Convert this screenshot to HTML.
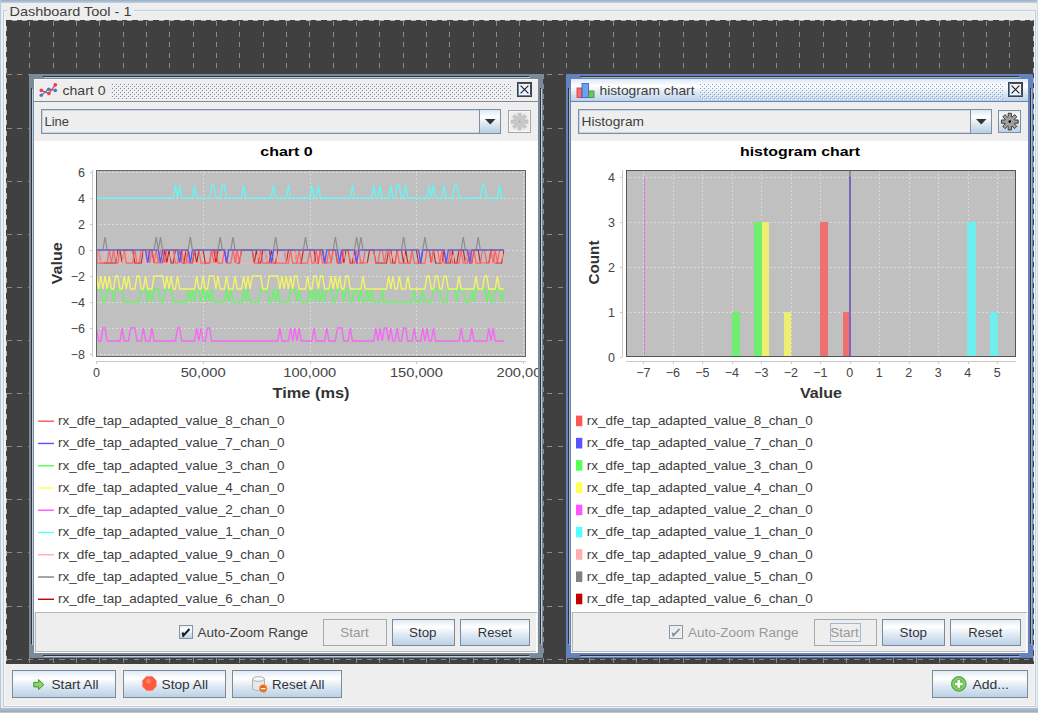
<!DOCTYPE html><html><head><meta charset="utf-8"><style>
html,body{margin:0;padding:0;background:#eeeeee;width:1038px;height:713px;overflow:hidden}
svg{display:block;font-family:"Liberation Sans",sans-serif}
</style></head><body>
<svg width="1038" height="713" viewBox="0 0 1038 713" shape-rendering="crispEdges">
<defs>
<linearGradient id="btn" x1="0" y1="0" x2="0" y2="1">
<stop offset="0" stop-color="#DDE8F3"/><stop offset="0.3" stop-color="#FFFFFF"/><stop offset="0.6" stop-color="#DDE8F3"/><stop offset="1" stop-color="#B8CFE5"/>
</linearGradient>
<linearGradient id="winTop" x1="0" y1="0" x2="0" y2="1">
<stop offset="0" stop-color="#a4acb4"/><stop offset="0.35" stop-color="#a4bcd4"/><stop offset="1" stop-color="#c0d2e4"/>
</linearGradient>
<linearGradient id="winBot" x1="0" y1="0" x2="0" y2="1">
<stop offset="0" stop-color="#b0c0d0"/><stop offset="1" stop-color="#96a6b6"/>
</linearGradient>
<pattern id="bumpsI" x="0" y="0" width="4" height="4" patternUnits="userSpaceOnUse">
<rect x="0" y="0" width="1" height="1" fill="#7A8A99"/><rect x="2" y="2" width="1" height="1" fill="#7A8A99"/>
<rect x="1" y="1" width="1" height="1" fill="#ffffff"/><rect x="3" y="3" width="1" height="1" fill="#ffffff"/>
</pattern>
<pattern id="bumpsA" x="0" y="0" width="4" height="4" patternUnits="userSpaceOnUse">
<rect x="0" y="0" width="1" height="1" fill="#86a0d0"/><rect x="2" y="2" width="1" height="1" fill="#86a0d0"/>
<rect x="1" y="1" width="1" height="1" fill="#ffffff"/><rect x="3" y="3" width="1" height="1" fill="#ffffff"/>
</pattern>
</defs>

<rect x="0" y="0" width="1038" height="3" fill="url(#winTop)" />
<rect x="0" y="0" width="1" height="713" fill="#b8c8d8" />
<rect x="1037" y="0" width="1" height="713" fill="#d0dce8" />
<rect x="0" y="708" width="1038" height="5" fill="url(#winBot)" />
<rect x="0" y="712" width="1038" height="1" fill="#c8c4c0" />
<rect x="3.5" y="10.5" width="1032" height="696" fill="none" stroke="#B8CFE5" stroke-width="1"/>
<rect x="4.5" y="11.5" width="1030" height="694" fill="none" stroke="#f6f6f6" stroke-width="1"/>
<rect x="7" y="4" width="127" height="12" fill="#eeeeee" />
<text x="9.5" y="15.5" font-size="13" fill="#3e3e3e" textLength="122" lengthAdjust="spacingAndGlyphs" >Dashboard Tool - 1</text>
<rect x="6" y="20" width="1028" height="644" fill="#404040" />
<path d="M29.5 21.4V663 M53.5 21.4V663 M76.5 21.4V663 M99.5 21.4V663 M123.5 21.4V663 M146.5 21.4V663 M169.5 21.4V663 M193.5 21.4V663 M216.5 21.4V663 M239.5 21.4V663 M263.5 21.4V663 M286.5 21.4V663 M309.5 21.4V663 M333.5 21.4V663 M356.5 21.4V663 M379.5 21.4V663 M403.5 21.4V663 M426.5 21.4V663 M449.5 21.4V663 M473.5 21.4V663 M496.5 21.4V663 M519.5 21.4V663 M543.5 21.4V663 M566.5 21.4V663 M589.5 21.4V663 M613.5 21.4V663 M636.5 21.4V663 M659.5 21.4V663 M683.5 21.4V663 M706.5 21.4V663 M729.5 21.4V663 M753.5 21.4V663 M776.5 21.4V663 M799.5 21.4V663 M823.5 21.4V663 M846.5 21.4V663 M869.5 21.4V663 M893.5 21.4V663 M916.5 21.4V663 M939.5 21.4V663 M963.5 21.4V663 M986.5 21.4V663 M1009.5 21.4V663" stroke="#8a8a8a" stroke-width="1" stroke-dasharray="5 5.436" fill="none"/>
<path d="M6.3 74.5H1033 M6.3 128.5H1033 M6.3 181.5H1033 M6.3 234.5H1033 M6.3 287.5H1033 M6.3 340.5H1033 M6.3 393.5H1033 M6.3 446.5H1033 M6.3 499.5H1033 M6.3 552.5H1033 M6.3 606.5H1033 M6.3 659.5H1033" stroke="#8a8a8a" stroke-width="1" stroke-dasharray="5.4 5.2" fill="none"/>
<path d="M6 20.5H1034M6.5 20V664M1033.5 20V664" stroke="#b4b4b4" stroke-width="1" fill="none"/>
<path d="M6 20.5H1034M6.5 20V664" stroke="#404040" stroke-width="1" stroke-dasharray="5.5 5" fill="none"/>
<rect x="29" y="74" width="514" height="584" fill="#7A8A99" />
<rect x="43" y="76" width="486" height="1" fill="#333333" />
<rect x="31" y="88" width="1" height="556" fill="#333333" />
<rect x="540" y="88" width="1" height="556" fill="#333333" />
<rect x="43" y="655" width="486" height="1" fill="#333333" />
<rect x="44" y="77" width="486" height="1" fill="#B8CFE5" />
<rect x="32" y="89" width="1" height="556" fill="#B8CFE5" />
<rect x="541" y="89" width="1" height="556" fill="#B8CFE5" />
<rect x="44" y="656" width="486" height="1" fill="#B8CFE5" />
<rect x="34" y="79" width="504" height="574" fill="#eeeeee" />
<rect x="34" y="79" width="504" height="23" fill="#eeeeee" />
<rect x="34" y="101" width="504" height="1" fill="#7A8A99" />
<rect x="566" y="74" width="467" height="584" fill="#6382BF" />
<rect x="580" y="76" width="439" height="1" fill="#333333" />
<rect x="568" y="88" width="1" height="556" fill="#333333" />
<rect x="1030" y="88" width="1" height="556" fill="#333333" />
<rect x="580" y="655" width="439" height="1" fill="#333333" />
<rect x="581" y="77" width="439" height="1" fill="#A3B8CC" />
<rect x="569" y="89" width="1" height="556" fill="#A3B8CC" />
<rect x="1031" y="89" width="1" height="556" fill="#A3B8CC" />
<rect x="581" y="656" width="439" height="1" fill="#A3B8CC" />
<rect x="571" y="79" width="457" height="574" fill="#eeeeee" />
<rect x="571" y="79" width="457" height="23" fill="url(#btn)" />
<rect x="571" y="101" width="457" height="1" fill="#6382BF" />
<rect x="34" y="79" width="504" height="1" fill="#fafafa" />
<rect x="34" y="79" width="1" height="22" fill="#fafafa" />
<g shape-rendering="geometricPrecision"><polyline points="41.3,95.3 48.7,89.2 55.3,90.4" fill="none" stroke="#4a7ac8" stroke-width="1.3"/><circle cx="41.3" cy="95.3" r="1.8" fill="#4a7ac8"/><circle cx="48.7" cy="89.2" r="1.8" fill="#4a7ac8"/><circle cx="55.3" cy="90.4" r="1.8" fill="#4a7ac8"/><polyline points="41.3,90.4 48.9,93.5 55.3,84.8" fill="none" stroke="#e8404a" stroke-width="1.3"/><circle cx="41.3" cy="90.4" r="1.8" fill="#e8404a"/><circle cx="48.9" cy="93.5" r="1.8" fill="#e8404a"/><circle cx="55.3" cy="84.8" r="1.9" fill="#e8404a"/></g>
<text x="62.5" y="95" font-size="13" fill="#3e3e3e" textLength="43" lengthAdjust="spacingAndGlyphs" >chart 0</text>
<rect x="112" y="84" width="399" height="16" fill="url(#bumpsI)" />
<rect x="517" y="82" width="15" height="15" fill="#3c4048" />
<rect x="518" y="83" width="13" height="13" fill="#6382BF" />
<rect x="519" y="83" width="12" height="12" fill="#4a4e58" />
<rect x="519" y="84" width="11" height="11" fill="#f4f4f4" />
<path d="M520.6 85.6L528.4 93.4M520.6 93.4L528.4 85.6" stroke="#1e2230" stroke-width="1.15" fill="none" shape-rendering="geometricPrecision"/>
<g shape-rendering="geometricPrecision"><rect x="577" y="88" width="5" height="9.5" fill="#f07070" stroke="#e03030" stroke-width="0.8"/><rect x="582" y="83.5" width="6.5" height="14" fill="#70a0f0" stroke="#2a5ad0" stroke-width="0.8"/><rect x="588.7" y="91" width="5.3" height="6.5" fill="#70c070" stroke="#30903a" stroke-width="0.8"/></g>
<text x="599.5" y="95" font-size="13" fill="#3e3e3e" textLength="95" lengthAdjust="spacingAndGlyphs" >histogram chart</text>
<rect x="700" y="84" width="303" height="16" fill="url(#bumpsA)" />
<rect x="1008" y="82" width="15" height="15" fill="#3c4048" />
<rect x="1009" y="83" width="13" height="13" fill="#6382BF" />
<rect x="1010" y="83" width="12" height="12" fill="#4a4e58" />
<rect x="1010" y="84" width="11" height="11" fill="#f4f4f4" />
<path d="M1011.6 85.6L1019.4 93.4M1011.6 93.4L1019.4 85.6" stroke="#1e2230" stroke-width="1.15" fill="none" shape-rendering="geometricPrecision"/>
<rect x="41" y="109" width="460" height="25" fill="#7F8FA0" />
<rect x="42" y="110" width="458" height="23" fill="#C4D6E8" />
<rect x="43" y="111" width="436" height="21" fill="#eeeeee" />
<rect x="479" y="110" width="1" height="23" fill="#7F8FA0" />
<rect x="480" y="110" width="20" height="23" fill="url(#btn)" />
<path d="M485 119H495.5L490.25 124.5Z" fill="#333" shape-rendering="geometricPrecision"/>
<text x="44.5" y="126" font-size="13" fill="#3e3e3e" >Line</text>
<rect x="508.5" y="110.5" width="22" height="22" fill="none" stroke="#a4a4a4"/>
<rect x="509.5" y="111.5" width="20" height="20" fill="none" stroke="#f8f8f8"/>
<path d="M517.98 116.87 L517.99 113.25 L521.21 113.25 L521.22 116.87 L521.80 117.11 L524.37 114.56 L526.64 116.83 L524.09 119.40 L524.33 119.98 L527.95 119.99 L527.95 123.21 L524.33 123.22 L524.09 123.80 L526.64 126.37 L524.37 128.64 L521.80 126.09 L521.22 126.33 L521.21 129.95 L517.99 129.95 L517.98 126.33 L517.40 126.09 L514.83 128.64 L512.56 126.37 L515.11 123.80 L514.87 123.22 L511.25 123.21 L511.25 119.99 L514.87 119.98 L515.11 119.40 L512.56 116.83 L514.83 114.56 L517.40 117.11Z" fill="#c8c8c8" stroke="#bcbcbc" stroke-width="0.8" shape-rendering="geometricPrecision"/>
<circle cx="519.6" cy="121.6" r="1.2" fill="#b0b0b0" shape-rendering="geometricPrecision"/>
<rect x="578" y="109" width="414" height="25" fill="#7F8FA0" />
<rect x="579" y="110" width="412" height="23" fill="#C4D6E8" />
<rect x="580" y="111" width="390" height="21" fill="#eeeeee" />
<rect x="970" y="110" width="1" height="23" fill="#7F8FA0" />
<rect x="971" y="110" width="20" height="23" fill="url(#btn)" />
<path d="M976 119H986.5L981.25 124.5Z" fill="#333" shape-rendering="geometricPrecision"/>
<text x="581.5" y="126" font-size="13" fill="#3e3e3e" textLength="62.5" lengthAdjust="spacingAndGlyphs" >Histogram</text>
<rect x="998" y="110" width="23" height="23" fill="url(#btn)" />
<rect x="998.5" y="110.5" width="22" height="22" fill="none" stroke="#8090a0"/>
<path d="M1008.18 116.87 L1008.19 113.25 L1011.41 113.25 L1011.42 116.87 L1012.00 117.11 L1014.57 114.56 L1016.84 116.83 L1014.29 119.40 L1014.53 119.98 L1018.15 119.99 L1018.15 123.21 L1014.53 123.22 L1014.29 123.80 L1016.84 126.37 L1014.57 128.64 L1012.00 126.09 L1011.42 126.33 L1011.41 129.95 L1008.19 129.95 L1008.18 126.33 L1007.60 126.09 L1005.03 128.64 L1002.76 126.37 L1005.31 123.80 L1005.07 123.22 L1001.45 123.21 L1001.45 119.99 L1005.07 119.98 L1005.31 119.40 L1002.76 116.83 L1005.03 114.56 L1007.60 117.11Z" fill="#a0a0a0" stroke="#2a2a2a" stroke-width="0.9" shape-rendering="geometricPrecision"/>
<circle cx="1009.8" cy="121.6" r="1.3" fill="#000" shape-rendering="geometricPrecision"/>
<rect x="34" y="141" width="504" height="471" fill="#ffffff" />
<rect x="571" y="141" width="457" height="471" fill="#ffffff" />
<rect x="35.5" y="612.5" width="501" height="39" fill="none" stroke="#b8b8b8"/>
<path d="M36 652.5H537 M536.5 613V652" stroke="#ffffff" fill="none"/>
<rect x="572.5" y="612.5" width="454" height="39" fill="none" stroke="#b8b8b8"/>
<path d="M573 652.5H1027 M1026.5 613V652" stroke="#ffffff" fill="none"/>
<rect x="179" y="625" width="14" height="14" fill="url(#btn)" />
<rect x="179.5" y="625.5" width="13" height="13" fill="none" stroke="#8595a5"/>
<path d="M182.6 632.6L183.3 635.6L189.5 629" stroke="#1a1a1a" stroke-width="2" fill="none" shape-rendering="geometricPrecision"/>
<text x="197.5" y="637" font-size="13" fill="#3e3e3e" textLength="110.5" lengthAdjust="spacingAndGlyphs" >Auto-Zoom Range</text>
<rect x="323.5" y="619.5" width="63" height="26" fill="none" stroke="#a8a8a8"/>
<text x="340.3" y="637" font-size="13" fill="#999999" textLength="28.5" lengthAdjust="spacingAndGlyphs" >Start</text>
<rect x="392" y="619" width="63" height="27" fill="url(#btn)" />
<rect x="392.5" y="619.5" width="62" height="26" fill="none" stroke="#7A8A99"/>
<text x="409" y="637" font-size="13" fill="#333333" textLength="27.5" lengthAdjust="spacingAndGlyphs" >Stop</text>
<rect x="460" y="619" width="70" height="27" fill="url(#btn)" />
<rect x="460.5" y="619.5" width="69" height="26" fill="none" stroke="#7A8A99"/>
<text x="477.8" y="637" font-size="13" fill="#333333" textLength="34" lengthAdjust="spacingAndGlyphs" >Reset</text>
<rect x="669.5" y="625.5" width="13" height="13" fill="none" stroke="#8a9aaa"/>
<path d="M672.6 632.6L673.3 635.6L679.5 629" stroke="#7a8a99" stroke-width="1.6" fill="none" shape-rendering="geometricPrecision"/>
<text x="688" y="637" font-size="13" fill="#999999" textLength="110.5" lengthAdjust="spacingAndGlyphs" >Auto-Zoom Range</text>
<rect x="814.5" y="619.5" width="62" height="26" fill="none" stroke="#a8a8a8"/>
<text x="830.3" y="637" font-size="13" fill="#999999" textLength="28.5" lengthAdjust="spacingAndGlyphs" >Start</text>
<rect x="830.5" y="623.5" width="30" height="18" fill="none" stroke="#A3B8CC"/>
<rect x="882" y="619" width="63" height="27" fill="url(#btn)" />
<rect x="882.5" y="619.5" width="62" height="26" fill="none" stroke="#7A8A99"/>
<text x="899.5" y="637" font-size="13" fill="#333333" textLength="27.5" lengthAdjust="spacingAndGlyphs" >Stop</text>
<rect x="950" y="619" width="71" height="27" fill="url(#btn)" />
<rect x="950.5" y="619.5" width="70" height="26" fill="none" stroke="#7A8A99"/>
<text x="968.3" y="637" font-size="13" fill="#333333" textLength="34" lengthAdjust="spacingAndGlyphs" >Reset</text>
<rect x="12" y="670" width="104" height="28" fill="url(#btn)" />
<rect x="12.5" y="670.5" width="103" height="27" fill="none" stroke="#7A8A99"/>
<text x="51.5" y="688.8" font-size="13" fill="#333333" textLength="47" lengthAdjust="spacingAndGlyphs" >Start All</text>
<path d="M33.8 682.3H38.6V679.6L43.9 684.6L38.6 689.6V686.9H33.8Z" fill="#92d070" stroke="#3a9a28" stroke-width="1" stroke-linejoin="round" shape-rendering="geometricPrecision"/>
<rect x="123" y="670" width="103" height="28" fill="url(#btn)" />
<rect x="123.5" y="670.5" width="102" height="27" fill="none" stroke="#7A8A99"/>
<text x="161.5" y="688.8" font-size="13" fill="#333333" textLength="46.5" lengthAdjust="spacingAndGlyphs" >Stop All</text>
<g shape-rendering="geometricPrecision"><polygon points="146.5,676.3 152.2,676.3 156.3,680.4 156.3,686.6 152.2,690.7 146.5,690.7 142.4,686.6 142.4,680.4" fill="#ff5a3a" stroke="#f0a090" stroke-width="0.8"/><circle cx="148.5" cy="681" r="2.5" fill="#ff9a80" opacity="0.6"/></g>
<rect x="232" y="670" width="110" height="28" fill="url(#btn)" />
<rect x="232.5" y="670.5" width="109" height="27" fill="none" stroke="#7A8A99"/>
<text x="272" y="688.8" font-size="13" fill="#333333" textLength="52.5" lengthAdjust="spacingAndGlyphs" >Reset All</text>
<g shape-rendering="geometricPrecision"><path d="M252.5 679V689.5Q258.5 692 264.5 689.5V679" fill="#e8e8e8" stroke="#b0b0b0" stroke-width="1"/><ellipse cx="258.5" cy="679" rx="6" ry="2.3" fill="#f8f8f8" stroke="#b0b0b0" stroke-width="1"/><circle cx="263.2" cy="688.5" r="3.9" fill="#e86a10" stroke="#ffb070" stroke-width="0.6"/><rect x="261" y="688" width="4.4" height="1.3" fill="#fff"/></g>
<rect x="932" y="670" width="96" height="28" fill="url(#btn)" />
<rect x="932.5" y="670.5" width="95" height="27" fill="none" stroke="#7A8A99"/>
<text x="972.5" y="688.8" font-size="13" fill="#333333" textLength="36.5" lengthAdjust="spacingAndGlyphs" >Add...</text>
<g shape-rendering="geometricPrecision"><circle cx="958.8" cy="683.9" r="7.4" fill="#6cc050" stroke="#4a9a3a" stroke-width="0.8"/><circle cx="958.8" cy="683.9" r="5.5" fill="none" stroke="#a8e090" stroke-width="0.7"/><rect x="955" y="682.8" width="7.6" height="2.4" fill="#fff"/><rect x="957.6" y="680.1" width="2.4" height="7.6" fill="#fff"/></g>
<clipPath id="clipPanelL"><rect x="34" y="141" width="504" height="471"/></clipPath>
<g shape-rendering="geometricPrecision" clip-path="url(#clipPanelL)">
<text x="286.5" y="155.8" font-size="13" fill="#000000" font-weight="bold" text-anchor="middle" textLength="52.5" lengthAdjust="spacingAndGlyphs" >chart 0</text>
<rect x="96" y="170" width="430" height="187" fill="#c0c0c0" />
<path d="M96 354.5H526 M96 328.5H526 M96 302.5H526 M96 276.5H526 M96 250.5H526 M96 224.5H526 M96 198.5H526 M96 172.5H526 M96.5 170V357 M203.5 170V357 M310.5 170V357 M416.5 170V357 M523.5 170V357" stroke="#dadada" stroke-width="1" stroke-dasharray="2 2" fill="none" shape-rendering="crispEdges"/>
<clipPath id="clipL"><rect x="96" y="170" width="430" height="187"/></clipPath>
<g clip-path="url(#clipL)" opacity="1">
<polyline points="96.50,198.00 98.63,198.00 100.77,198.00 102.90,198.00 105.03,198.00 107.16,198.00 109.30,198.00 111.43,198.00 113.56,198.00 115.69,198.00 117.83,198.00 119.96,198.00 122.09,198.00 124.22,198.00 126.35,198.00 128.49,198.00 130.62,198.00 132.75,198.00 134.88,198.00 137.02,198.00 139.15,198.00 141.28,198.00 143.41,198.00 145.55,198.00 147.68,198.00 149.81,198.00 151.94,198.00 154.08,198.00 156.21,198.00 158.34,198.00 160.47,198.00 162.61,198.00 164.74,198.00 166.87,198.00 169.00,198.00 171.14,198.00 173.27,198.00 175.40,185.00 177.53,198.00 179.67,185.00 181.80,198.00 183.93,198.00 186.06,198.00 188.20,198.00 190.33,198.00 192.46,198.00 194.59,185.00 196.73,198.00 198.86,198.00 200.99,198.00 203.12,198.00 205.26,198.00 207.39,198.00 209.52,198.00 211.65,185.00 213.79,185.00 215.92,198.00 218.05,198.00 220.19,198.00 222.32,185.00 224.45,185.00 226.58,198.00 228.72,198.00 230.85,198.00 232.98,198.00 235.11,198.00 237.24,198.00 239.38,198.00 241.51,198.00 243.64,185.00 245.77,198.00 247.91,198.00 250.04,198.00 252.17,198.00 254.30,198.00 256.44,198.00 258.57,198.00 260.70,198.00 262.83,198.00 264.97,198.00 267.10,198.00 269.23,198.00 271.37,198.00 273.50,185.00 275.63,198.00 277.76,198.00 279.89,198.00 282.03,198.00 284.16,198.00 286.29,198.00 288.42,185.00 290.56,198.00 292.69,198.00 294.82,198.00 296.95,198.00 299.09,198.00 301.22,198.00 303.35,198.00 305.49,198.00 307.62,198.00 309.75,198.00 311.88,185.00 314.01,198.00 316.15,198.00 318.28,185.00 320.41,198.00 322.54,198.00 324.68,198.00 326.81,198.00 328.94,198.00 331.07,198.00 333.21,198.00 335.34,198.00 337.47,198.00 339.61,198.00 341.74,198.00 343.87,198.00 346.00,198.00 348.13,198.00 350.27,198.00 352.40,185.00 354.53,198.00 356.66,198.00 358.80,198.00 360.93,198.00 363.06,198.00 365.19,198.00 367.33,198.00 369.46,198.00 371.59,198.00 373.72,185.00 375.86,198.00 377.99,198.00 380.12,185.00 382.25,198.00 384.39,198.00 386.52,198.00 388.65,198.00 390.78,185.00 392.92,198.00 395.05,198.00 397.18,185.00 399.31,185.00 401.45,198.00 403.58,198.00 405.71,185.00 407.84,198.00 409.98,198.00 412.11,198.00 414.24,198.00 416.38,198.00 418.51,198.00 420.64,198.00 422.77,198.00 424.90,198.00 427.04,198.00 429.17,185.00 431.30,198.00 433.44,185.00 435.57,198.00 437.70,198.00 439.83,198.00 441.96,198.00 444.10,185.00 446.23,198.00 448.36,198.00 450.49,198.00 452.63,198.00 454.76,185.00 456.89,185.00 459.02,198.00 461.16,198.00 463.29,198.00 465.42,198.00 467.55,198.00 469.69,198.00 471.82,198.00 473.95,198.00 476.08,198.00 478.22,198.00 480.35,198.00 482.48,185.00 484.61,185.00 486.75,198.00 488.88,198.00 491.01,198.00 493.14,198.00 495.28,198.00 497.41,198.00 499.54,185.00 501.67,198.00 503.81,198.00" fill="none" stroke="#55ffff" stroke-width="1.4" stroke-linejoin="miter" stroke-opacity="0.82"/>
<polyline points="96.50,328.00 98.63,341.00 100.77,341.00 102.90,328.00 105.03,328.00 107.16,341.00 109.30,341.00 111.43,341.00 113.56,341.00 115.69,341.00 117.83,341.00 119.96,341.00 122.09,328.00 124.22,341.00 126.35,341.00 128.49,341.00 130.62,328.00 132.75,328.00 134.88,328.00 137.02,341.00 139.15,341.00 141.28,341.00 143.41,328.00 145.55,341.00 147.68,341.00 149.81,341.00 151.94,328.00 154.08,341.00 156.21,341.00 158.34,341.00 160.47,341.00 162.61,341.00 164.74,341.00 166.87,341.00 169.00,341.00 171.14,341.00 173.27,341.00 175.40,341.00 177.53,328.00 179.67,328.00 181.80,341.00 183.93,341.00 186.06,341.00 188.20,341.00 190.33,341.00 192.46,341.00 194.59,341.00 196.73,328.00 198.86,341.00 200.99,328.00 203.12,341.00 205.26,341.00 207.39,328.00 209.52,328.00 211.65,341.00 213.79,341.00 215.92,341.00 218.05,341.00 220.19,341.00 222.32,341.00 224.45,341.00 226.58,341.00 228.72,341.00 230.85,341.00 232.98,341.00 235.11,341.00 237.24,341.00 239.38,341.00 241.51,341.00 243.64,341.00 245.77,341.00 247.91,341.00 250.04,341.00 252.17,341.00 254.30,341.00 256.44,341.00 258.57,341.00 260.70,341.00 262.83,341.00 264.97,341.00 267.10,341.00 269.23,341.00 271.37,341.00 273.50,341.00 275.63,341.00 277.76,341.00 279.89,328.00 282.03,341.00 284.16,341.00 286.29,341.00 288.42,341.00 290.56,328.00 292.69,341.00 294.82,328.00 296.95,341.00 299.09,328.00 301.22,341.00 303.35,341.00 305.49,341.00 307.62,341.00 309.75,341.00 311.88,341.00 314.01,328.00 316.15,341.00 318.28,341.00 320.41,341.00 322.54,341.00 324.68,341.00 326.81,328.00 328.94,341.00 331.07,341.00 333.21,341.00 335.34,341.00 337.47,328.00 339.61,328.00 341.74,328.00 343.87,341.00 346.00,341.00 348.13,341.00 350.27,328.00 352.40,341.00 354.53,341.00 356.66,341.00 358.80,341.00 360.93,341.00 363.06,341.00 365.19,341.00 367.33,341.00 369.46,341.00 371.59,341.00 373.72,341.00 375.86,328.00 377.99,341.00 380.12,328.00 382.25,341.00 384.39,328.00 386.52,328.00 388.65,341.00 390.78,328.00 392.92,341.00 395.05,341.00 397.18,328.00 399.31,341.00 401.45,341.00 403.58,328.00 405.71,328.00 407.84,341.00 409.98,341.00 412.11,341.00 414.24,328.00 416.38,341.00 418.51,341.00 420.64,341.00 422.77,328.00 424.90,341.00 427.04,328.00 429.17,341.00 431.30,341.00 433.44,328.00 435.57,341.00 437.70,341.00 439.83,341.00 441.96,341.00 444.10,341.00 446.23,341.00 448.36,341.00 450.49,341.00 452.63,341.00 454.76,341.00 456.89,341.00 459.02,341.00 461.16,328.00 463.29,341.00 465.42,341.00 467.55,341.00 469.69,341.00 471.82,328.00 473.95,341.00 476.08,341.00 478.22,341.00 480.35,341.00 482.48,341.00 484.61,341.00 486.75,341.00 488.88,328.00 491.01,341.00 493.14,328.00 495.28,341.00 497.41,341.00 499.54,341.00 501.67,341.00 503.81,341.00" fill="none" stroke="#ff55ff" stroke-width="1.4" stroke-linejoin="miter" stroke-opacity="0.82"/>
<polyline points="96.50,289.00 98.63,289.00 100.77,289.00 102.90,302.00 105.03,302.00 107.16,289.00 109.30,289.00 111.43,289.00 113.56,302.00 115.69,289.00 117.83,289.00 119.96,289.00 122.09,289.00 124.22,302.00 126.35,302.00 128.49,302.00 130.62,302.00 132.75,302.00 134.88,302.00 137.02,302.00 139.15,302.00 141.28,289.00 143.41,289.00 145.55,289.00 147.68,302.00 149.81,289.00 151.94,302.00 154.08,289.00 156.21,289.00 158.34,289.00 160.47,302.00 162.61,302.00 164.74,289.00 166.87,289.00 169.00,289.00 171.14,289.00 173.27,302.00 175.40,302.00 177.53,302.00 179.67,302.00 181.80,302.00 183.93,302.00 186.06,302.00 188.20,289.00 190.33,302.00 192.46,289.00 194.59,302.00 196.73,289.00 198.86,289.00 200.99,302.00 203.12,289.00 205.26,302.00 207.39,289.00 209.52,302.00 211.65,289.00 213.79,302.00 215.92,302.00 218.05,302.00 220.19,302.00 222.32,302.00 224.45,302.00 226.58,289.00 228.72,302.00 230.85,289.00 232.98,302.00 235.11,302.00 237.24,302.00 239.38,302.00 241.51,302.00 243.64,289.00 245.77,302.00 247.91,289.00 250.04,302.00 252.17,302.00 254.30,302.00 256.44,302.00 258.57,302.00 260.70,289.00 262.83,289.00 264.97,289.00 267.10,289.00 269.23,302.00 271.37,302.00 273.50,289.00 275.63,302.00 277.76,289.00 279.89,302.00 282.03,302.00 284.16,302.00 286.29,302.00 288.42,302.00 290.56,289.00 292.69,289.00 294.82,289.00 296.95,302.00 299.09,289.00 301.22,302.00 303.35,302.00 305.49,302.00 307.62,302.00 309.75,289.00 311.88,302.00 314.01,289.00 316.15,302.00 318.28,289.00 320.41,302.00 322.54,289.00 324.68,302.00 326.81,289.00 328.94,289.00 331.07,289.00 333.21,302.00 335.34,302.00 337.47,289.00 339.61,289.00 341.74,289.00 343.87,302.00 346.00,289.00 348.13,289.00 350.27,302.00 352.40,302.00 354.53,289.00 356.66,289.00 358.80,302.00 360.93,289.00 363.06,302.00 365.19,302.00 367.33,289.00 369.46,302.00 371.59,289.00 373.72,302.00 375.86,302.00 377.99,302.00 380.12,302.00 382.25,289.00 384.39,302.00 386.52,302.00 388.65,302.00 390.78,302.00 392.92,302.00 395.05,302.00 397.18,302.00 399.31,302.00 401.45,302.00 403.58,302.00 405.71,302.00 407.84,302.00 409.98,302.00 412.11,302.00 414.24,289.00 416.38,302.00 418.51,302.00 420.64,302.00 422.77,289.00 424.90,302.00 427.04,302.00 429.17,302.00 431.30,302.00 433.44,289.00 435.57,289.00 437.70,289.00 439.83,289.00 441.96,302.00 444.10,302.00 446.23,302.00 448.36,289.00 450.49,289.00 452.63,289.00 454.76,289.00 456.89,302.00 459.02,289.00 461.16,289.00 463.29,289.00 465.42,302.00 467.55,302.00 469.69,302.00 471.82,289.00 473.95,302.00 476.08,289.00 478.22,289.00 480.35,289.00 482.48,289.00 484.61,289.00 486.75,302.00 488.88,289.00 491.01,302.00 493.14,302.00 495.28,289.00 497.41,289.00 499.54,289.00 501.67,302.00 503.81,289.00" fill="none" stroke="#55ff55" stroke-width="1.4" stroke-linejoin="miter" stroke-opacity="0.82"/>
<polyline points="96.50,276.00 98.63,289.00 100.77,276.00 102.90,289.00 105.03,276.00 107.16,289.00 109.30,276.00 111.43,289.00 113.56,289.00 115.69,276.00 117.83,276.00 119.96,289.00 122.09,289.00 124.22,276.00 126.35,289.00 128.49,276.00 130.62,289.00 132.75,289.00 134.88,289.00 137.02,276.00 139.15,276.00 141.28,289.00 143.41,289.00 145.55,276.00 147.68,289.00 149.81,289.00 151.94,289.00 154.08,276.00 156.21,276.00 158.34,276.00 160.47,276.00 162.61,276.00 164.74,289.00 166.87,276.00 169.00,289.00 171.14,276.00 173.27,289.00 175.40,289.00 177.53,276.00 179.67,289.00 181.80,289.00 183.93,289.00 186.06,289.00 188.20,289.00 190.33,289.00 192.46,289.00 194.59,289.00 196.73,276.00 198.86,289.00 200.99,289.00 203.12,276.00 205.26,289.00 207.39,289.00 209.52,276.00 211.65,276.00 213.79,276.00 215.92,289.00 218.05,276.00 220.19,289.00 222.32,289.00 224.45,289.00 226.58,276.00 228.72,289.00 230.85,289.00 232.98,289.00 235.11,276.00 237.24,289.00 239.38,289.00 241.51,289.00 243.64,276.00 245.77,289.00 247.91,276.00 250.04,289.00 252.17,276.00 254.30,276.00 256.44,276.00 258.57,276.00 260.70,276.00 262.83,289.00 264.97,289.00 267.10,289.00 269.23,276.00 271.37,276.00 273.50,276.00 275.63,276.00 277.76,276.00 279.89,289.00 282.03,276.00 284.16,289.00 286.29,276.00 288.42,289.00 290.56,276.00 292.69,289.00 294.82,276.00 296.95,276.00 299.09,289.00 301.22,289.00 303.35,289.00 305.49,289.00 307.62,276.00 309.75,289.00 311.88,289.00 314.01,276.00 316.15,276.00 318.28,289.00 320.41,276.00 322.54,276.00 324.68,289.00 326.81,289.00 328.94,289.00 331.07,276.00 333.21,289.00 335.34,276.00 337.47,289.00 339.61,276.00 341.74,289.00 343.87,289.00 346.00,276.00 348.13,276.00 350.27,289.00 352.40,289.00 354.53,289.00 356.66,289.00 358.80,289.00 360.93,289.00 363.06,276.00 365.19,289.00 367.33,289.00 369.46,289.00 371.59,289.00 373.72,289.00 375.86,289.00 377.99,289.00 380.12,289.00 382.25,289.00 384.39,289.00 386.52,289.00 388.65,276.00 390.78,289.00 392.92,276.00 395.05,289.00 397.18,289.00 399.31,276.00 401.45,289.00 403.58,289.00 405.71,289.00 407.84,276.00 409.98,289.00 412.11,289.00 414.24,289.00 416.38,289.00 418.51,289.00 420.64,289.00 422.77,289.00 424.90,289.00 427.04,276.00 429.17,276.00 431.30,289.00 433.44,289.00 435.57,276.00 437.70,276.00 439.83,289.00 441.96,289.00 444.10,276.00 446.23,276.00 448.36,289.00 450.49,289.00 452.63,289.00 454.76,289.00 456.89,289.00 459.02,276.00 461.16,289.00 463.29,289.00 465.42,289.00 467.55,289.00 469.69,289.00 471.82,289.00 473.95,289.00 476.08,276.00 478.22,289.00 480.35,289.00 482.48,289.00 484.61,276.00 486.75,276.00 488.88,289.00 491.01,289.00 493.14,289.00 495.28,289.00 497.41,276.00 499.54,289.00 501.67,289.00 503.81,289.00" fill="none" stroke="#ffff55" stroke-width="1.4" stroke-linejoin="miter" stroke-opacity="0.82"/>
<polyline points="96.50,263.00 98.63,250.00 100.77,263.00 102.90,263.00 105.03,263.00 107.16,263.00 109.30,263.00 111.43,263.00 113.56,263.00 115.69,263.00 117.83,250.00 119.96,250.00 122.09,263.00 124.22,250.00 126.35,250.00 128.49,250.00 130.62,250.00 132.75,250.00 134.88,263.00 137.02,263.00 139.15,263.00 141.28,263.00 143.41,250.00 145.55,250.00 147.68,250.00 149.81,250.00 151.94,250.00 154.08,263.00 156.21,263.00 158.34,263.00 160.47,263.00 162.61,263.00 164.74,250.00 166.87,263.00 169.00,250.00 171.14,263.00 173.27,263.00 175.40,250.00 177.53,250.00 179.67,250.00 181.80,263.00 183.93,263.00 186.06,250.00 188.20,263.00 190.33,263.00 192.46,263.00 194.59,250.00 196.73,263.00 198.86,250.00 200.99,250.00 203.12,250.00 205.26,263.00 207.39,263.00 209.52,263.00 211.65,250.00 213.79,250.00 215.92,263.00 218.05,250.00 220.19,250.00 222.32,250.00 224.45,250.00 226.58,263.00 228.72,250.00 230.85,250.00 232.98,250.00 235.11,250.00 237.24,263.00 239.38,263.00 241.51,250.00 243.64,250.00 245.77,250.00 247.91,250.00 250.04,250.00 252.17,250.00 254.30,263.00 256.44,250.00 258.57,263.00 260.70,263.00 262.83,250.00 264.97,250.00 267.10,263.00 269.23,263.00 271.37,250.00 273.50,263.00 275.63,263.00 277.76,250.00 279.89,250.00 282.03,250.00 284.16,250.00 286.29,263.00 288.42,250.00 290.56,250.00 292.69,250.00 294.82,250.00 296.95,263.00 299.09,263.00 301.22,263.00 303.35,250.00 305.49,250.00 307.62,250.00 309.75,250.00 311.88,250.00 314.01,250.00 316.15,263.00 318.28,263.00 320.41,250.00 322.54,250.00 324.68,263.00 326.81,263.00 328.94,263.00 331.07,263.00 333.21,250.00 335.34,250.00 337.47,263.00 339.61,263.00 341.74,250.00 343.87,263.00 346.00,250.00 348.13,250.00 350.27,263.00 352.40,263.00 354.53,250.00 356.66,263.00 358.80,263.00 360.93,263.00 363.06,263.00 365.19,263.00 367.33,263.00 369.46,250.00 371.59,250.00 373.72,250.00 375.86,263.00 377.99,263.00 380.12,263.00 382.25,263.00 384.39,263.00 386.52,263.00 388.65,250.00 390.78,250.00 392.92,263.00 395.05,263.00 397.18,250.00 399.31,250.00 401.45,250.00 403.58,263.00 405.71,250.00 407.84,263.00 409.98,263.00 412.11,250.00 414.24,250.00 416.38,250.00 418.51,263.00 420.64,263.00 422.77,250.00 424.90,250.00 427.04,250.00 429.17,250.00 431.30,263.00 433.44,250.00 435.57,263.00 437.70,263.00 439.83,263.00 441.96,263.00 444.10,250.00 446.23,263.00 448.36,263.00 450.49,263.00 452.63,250.00 454.76,263.00 456.89,263.00 459.02,250.00 461.16,250.00 463.29,250.00 465.42,263.00 467.55,250.00 469.69,263.00 471.82,263.00 473.95,250.00 476.08,250.00 478.22,250.00 480.35,263.00 482.48,263.00 484.61,263.00 486.75,263.00 488.88,263.00 491.01,250.00 493.14,250.00 495.28,263.00 497.41,263.00 499.54,263.00 501.67,263.00 503.81,250.00" fill="none" stroke="#c00000" stroke-width="1.1" stroke-linejoin="miter" stroke-opacity="0.82"/>
<polyline points="96.50,263.00 98.63,250.00 100.77,263.00 102.90,263.00 105.03,250.00 107.16,250.00 109.30,250.00 111.43,250.00 113.56,250.00 115.69,250.00 117.83,263.00 119.96,263.00 122.09,263.00 124.22,250.00 126.35,263.00 128.49,250.00 130.62,263.00 132.75,263.00 134.88,250.00 137.02,263.00 139.15,250.00 141.28,250.00 143.41,250.00 145.55,263.00 147.68,263.00 149.81,263.00 151.94,263.00 154.08,263.00 156.21,263.00 158.34,263.00 160.47,263.00 162.61,263.00 164.74,263.00 166.87,263.00 169.00,263.00 171.14,250.00 173.27,250.00 175.40,263.00 177.53,263.00 179.67,263.00 181.80,263.00 183.93,250.00 186.06,250.00 188.20,263.00 190.33,263.00 192.46,263.00 194.59,263.00 196.73,263.00 198.86,263.00 200.99,250.00 203.12,250.00 205.26,250.00 207.39,263.00 209.52,263.00 211.65,250.00 213.79,263.00 215.92,263.00 218.05,263.00 220.19,263.00 222.32,250.00 224.45,263.00 226.58,263.00 228.72,250.00 230.85,250.00 232.98,250.00 235.11,250.00 237.24,263.00 239.38,250.00 241.51,263.00 243.64,263.00 245.77,263.00 247.91,263.00 250.04,263.00 252.17,263.00 254.30,263.00 256.44,263.00 258.57,250.00 260.70,250.00 262.83,250.00 264.97,250.00 267.10,263.00 269.23,263.00 271.37,263.00 273.50,263.00 275.63,250.00 277.76,263.00 279.89,263.00 282.03,250.00 284.16,250.00 286.29,263.00 288.42,263.00 290.56,250.00 292.69,263.00 294.82,250.00 296.95,263.00 299.09,263.00 301.22,250.00 303.35,250.00 305.49,250.00 307.62,250.00 309.75,263.00 311.88,263.00 314.01,263.00 316.15,263.00 318.28,250.00 320.41,263.00 322.54,263.00 324.68,263.00 326.81,263.00 328.94,263.00 331.07,263.00 333.21,250.00 335.34,250.00 337.47,250.00 339.61,263.00 341.74,250.00 343.87,250.00 346.00,263.00 348.13,263.00 350.27,250.00 352.40,250.00 354.53,263.00 356.66,250.00 358.80,263.00 360.93,263.00 363.06,263.00 365.19,263.00 367.33,263.00 369.46,263.00 371.59,263.00 373.72,263.00 375.86,250.00 377.99,250.00 380.12,250.00 382.25,250.00 384.39,263.00 386.52,250.00 388.65,250.00 390.78,263.00 392.92,250.00 395.05,250.00 397.18,263.00 399.31,250.00 401.45,250.00 403.58,250.00 405.71,263.00 407.84,263.00 409.98,263.00 412.11,250.00 414.24,250.00 416.38,250.00 418.51,250.00 420.64,250.00 422.77,250.00 424.90,250.00 427.04,263.00 429.17,263.00 431.30,263.00 433.44,250.00 435.57,250.00 437.70,263.00 439.83,250.00 441.96,263.00 444.10,263.00 446.23,250.00 448.36,250.00 450.49,250.00 452.63,263.00 454.76,250.00 456.89,250.00 459.02,250.00 461.16,250.00 463.29,263.00 465.42,263.00 467.55,250.00 469.69,263.00 471.82,250.00 473.95,263.00 476.08,263.00 478.22,263.00 480.35,263.00 482.48,263.00 484.61,263.00 486.75,263.00 488.88,263.00 491.01,263.00 493.14,250.00 495.28,263.00 497.41,250.00 499.54,263.00 501.67,250.00 503.81,263.00" fill="none" stroke="#ffafaf" stroke-width="1.25" stroke-linejoin="miter" stroke-opacity="0.82"/>
<polyline points="96.50,263.00 98.63,263.00 100.77,263.00 102.90,263.00 105.03,263.00 107.16,263.00 109.30,250.00 111.43,263.00 113.56,250.00 115.69,263.00 117.83,263.00 119.96,250.00 122.09,250.00 124.22,250.00 126.35,263.00 128.49,263.00 130.62,263.00 132.75,263.00 134.88,250.00 137.02,263.00 139.15,263.00 141.28,250.00 143.41,250.00 145.55,250.00 147.68,250.00 149.81,263.00 151.94,250.00 154.08,263.00 156.21,250.00 158.34,263.00 160.47,250.00 162.61,250.00 164.74,263.00 166.87,250.00 169.00,250.00 171.14,250.00 173.27,250.00 175.40,263.00 177.53,263.00 179.67,250.00 181.80,250.00 183.93,263.00 186.06,263.00 188.20,250.00 190.33,263.00 192.46,263.00 194.59,250.00 196.73,250.00 198.86,250.00 200.99,263.00 203.12,263.00 205.26,263.00 207.39,263.00 209.52,263.00 211.65,250.00 213.79,263.00 215.92,250.00 218.05,263.00 220.19,263.00 222.32,263.00 224.45,250.00 226.58,263.00 228.72,263.00 230.85,263.00 232.98,250.00 235.11,263.00 237.24,250.00 239.38,263.00 241.51,250.00 243.64,250.00 245.77,250.00 247.91,250.00 250.04,250.00 252.17,250.00 254.30,263.00 256.44,263.00 258.57,263.00 260.70,250.00 262.83,263.00 264.97,263.00 267.10,263.00 269.23,263.00 271.37,263.00 273.50,263.00 275.63,263.00 277.76,263.00 279.89,263.00 282.03,263.00 284.16,263.00 286.29,263.00 288.42,263.00 290.56,250.00 292.69,263.00 294.82,263.00 296.95,263.00 299.09,250.00 301.22,263.00 303.35,263.00 305.49,263.00 307.62,263.00 309.75,250.00 311.88,263.00 314.01,263.00 316.15,250.00 318.28,263.00 320.41,250.00 322.54,263.00 324.68,263.00 326.81,263.00 328.94,250.00 331.07,263.00 333.21,250.00 335.34,250.00 337.47,263.00 339.61,263.00 341.74,263.00 343.87,250.00 346.00,250.00 348.13,250.00 350.27,263.00 352.40,263.00 354.53,263.00 356.66,250.00 358.80,250.00 360.93,263.00 363.06,263.00 365.19,250.00 367.33,250.00 369.46,250.00 371.59,250.00 373.72,250.00 375.86,263.00 377.99,263.00 380.12,250.00 382.25,250.00 384.39,263.00 386.52,250.00 388.65,250.00 390.78,263.00 392.92,263.00 395.05,263.00 397.18,250.00 399.31,263.00 401.45,263.00 403.58,263.00 405.71,263.00 407.84,263.00 409.98,263.00 412.11,250.00 414.24,263.00 416.38,263.00 418.51,263.00 420.64,263.00 422.77,263.00 424.90,263.00 427.04,250.00 429.17,250.00 431.30,263.00 433.44,250.00 435.57,250.00 437.70,250.00 439.83,263.00 441.96,250.00 444.10,263.00 446.23,263.00 448.36,263.00 450.49,250.00 452.63,263.00 454.76,263.00 456.89,263.00 459.02,263.00 461.16,250.00 463.29,263.00 465.42,263.00 467.55,263.00 469.69,250.00 471.82,263.00 473.95,250.00 476.08,263.00 478.22,263.00 480.35,263.00 482.48,250.00 484.61,250.00 486.75,263.00 488.88,263.00 491.01,250.00 493.14,263.00 495.28,250.00 497.41,263.00 499.54,250.00 501.67,250.00 503.81,250.00" fill="none" stroke="#ff5555" stroke-width="1.25" stroke-linejoin="miter" stroke-opacity="0.82"/>
<polyline points="96.50,250.00 98.63,250.00 100.77,250.00 102.90,250.00 105.03,250.00 107.16,250.00 109.30,250.00 111.43,250.00 113.56,250.00 115.69,250.00 117.83,250.00 119.96,250.00 122.09,250.00 124.22,250.00 126.35,250.00 128.49,250.00 130.62,250.00 132.75,250.00 134.88,250.00 137.02,250.00 139.15,250.00 141.28,250.00 143.41,250.00 145.55,250.00 147.68,263.00 149.81,250.00 151.94,250.00 154.08,250.00 156.21,250.00 158.34,250.00 160.47,263.00 162.61,250.00 164.74,250.00 166.87,250.00 169.00,250.00 171.14,250.00 173.27,250.00 175.40,250.00 177.53,250.00 179.67,263.00 181.80,250.00 183.93,250.00 186.06,250.00 188.20,250.00 190.33,263.00 192.46,250.00 194.59,250.00 196.73,250.00 198.86,250.00 200.99,250.00 203.12,250.00 205.26,250.00 207.39,250.00 209.52,250.00 211.65,250.00 213.79,250.00 215.92,250.00 218.05,250.00 220.19,250.00 222.32,250.00 224.45,250.00 226.58,263.00 228.72,250.00 230.85,250.00 232.98,250.00 235.11,250.00 237.24,250.00 239.38,250.00 241.51,250.00 243.64,250.00 245.77,250.00 247.91,250.00 250.04,250.00 252.17,250.00 254.30,250.00 256.44,250.00 258.57,250.00 260.70,250.00 262.83,250.00 264.97,250.00 267.10,250.00 269.23,250.00 271.37,263.00 273.50,250.00 275.63,250.00 277.76,250.00 279.89,250.00 282.03,250.00 284.16,250.00 286.29,250.00 288.42,250.00 290.56,250.00 292.69,250.00 294.82,250.00 296.95,250.00 299.09,250.00 301.22,250.00 303.35,250.00 305.49,250.00 307.62,250.00 309.75,250.00 311.88,250.00 314.01,250.00 316.15,250.00 318.28,250.00 320.41,250.00 322.54,250.00 324.68,263.00 326.81,250.00 328.94,250.00 331.07,250.00 333.21,250.00 335.34,250.00 337.47,250.00 339.61,263.00 341.74,250.00 343.87,250.00 346.00,250.00 348.13,250.00 350.27,250.00 352.40,250.00 354.53,250.00 356.66,263.00 358.80,250.00 360.93,250.00 363.06,250.00 365.19,250.00 367.33,250.00 369.46,250.00 371.59,250.00 373.72,250.00 375.86,250.00 377.99,250.00 380.12,250.00 382.25,250.00 384.39,250.00 386.52,250.00 388.65,250.00 390.78,250.00 392.92,250.00 395.05,250.00 397.18,250.00 399.31,250.00 401.45,250.00 403.58,250.00 405.71,250.00 407.84,250.00 409.98,250.00 412.11,250.00 414.24,250.00 416.38,250.00 418.51,250.00 420.64,263.00 422.77,250.00 424.90,250.00 427.04,250.00 429.17,250.00 431.30,250.00 433.44,250.00 435.57,250.00 437.70,250.00 439.83,250.00 441.96,250.00 444.10,250.00 446.23,263.00 448.36,250.00 450.49,250.00 452.63,250.00 454.76,250.00 456.89,250.00 459.02,250.00 461.16,250.00 463.29,250.00 465.42,250.00 467.55,250.00 469.69,263.00 471.82,250.00 473.95,250.00 476.08,250.00 478.22,250.00 480.35,250.00 482.48,250.00 484.61,250.00 486.75,250.00 488.88,250.00 491.01,250.00 493.14,250.00 495.28,250.00 497.41,250.00 499.54,250.00 501.67,250.00 503.81,250.00" fill="none" stroke="#5555ff" stroke-width="1.4" stroke-linejoin="miter" stroke-opacity="0.95"/>
<polyline points="96.50,250.00 98.63,250.00 100.77,250.00 102.90,250.00 105.03,237.00 107.16,250.00 109.30,250.00 111.43,250.00 113.56,250.00 115.69,250.00 117.83,250.00 119.96,250.00 122.09,250.00 124.22,250.00 126.35,250.00 128.49,250.00 130.62,250.00 132.75,250.00 134.88,250.00 137.02,250.00 139.15,250.00 141.28,250.00 143.41,250.00 145.55,250.00 147.68,250.00 149.81,250.00 151.94,250.00 154.08,250.00 156.21,237.00 158.34,250.00 160.47,237.00 162.61,250.00 164.74,250.00 166.87,250.00 169.00,250.00 171.14,250.00 173.27,250.00 175.40,250.00 177.53,250.00 179.67,250.00 181.80,250.00 183.93,250.00 186.06,250.00 188.20,250.00 190.33,237.00 192.46,250.00 194.59,250.00 196.73,250.00 198.86,250.00 200.99,250.00 203.12,250.00 205.26,250.00 207.39,250.00 209.52,250.00 211.65,250.00 213.79,250.00 215.92,250.00 218.05,250.00 220.19,237.00 222.32,250.00 224.45,250.00 226.58,250.00 228.72,250.00 230.85,250.00 232.98,237.00 235.11,250.00 237.24,250.00 239.38,250.00 241.51,250.00 243.64,250.00 245.77,250.00 247.91,250.00 250.04,250.00 252.17,250.00 254.30,250.00 256.44,250.00 258.57,250.00 260.70,250.00 262.83,250.00 264.97,250.00 267.10,250.00 269.23,250.00 271.37,250.00 273.50,250.00 275.63,237.00 277.76,250.00 279.89,250.00 282.03,250.00 284.16,250.00 286.29,250.00 288.42,250.00 290.56,250.00 292.69,250.00 294.82,250.00 296.95,250.00 299.09,250.00 301.22,250.00 303.35,250.00 305.49,237.00 307.62,250.00 309.75,250.00 311.88,250.00 314.01,250.00 316.15,250.00 318.28,250.00 320.41,250.00 322.54,250.00 324.68,250.00 326.81,250.00 328.94,250.00 331.07,250.00 333.21,250.00 335.34,237.00 337.47,250.00 339.61,250.00 341.74,250.00 343.87,250.00 346.00,250.00 348.13,250.00 350.27,250.00 352.40,250.00 354.53,250.00 356.66,237.00 358.80,250.00 360.93,237.00 363.06,250.00 365.19,250.00 367.33,250.00 369.46,250.00 371.59,250.00 373.72,250.00 375.86,250.00 377.99,250.00 380.12,250.00 382.25,250.00 384.39,250.00 386.52,250.00 388.65,250.00 390.78,250.00 392.92,250.00 395.05,250.00 397.18,250.00 399.31,250.00 401.45,250.00 403.58,237.00 405.71,250.00 407.84,250.00 409.98,250.00 412.11,250.00 414.24,250.00 416.38,250.00 418.51,250.00 420.64,250.00 422.77,250.00 424.90,237.00 427.04,250.00 429.17,250.00 431.30,250.00 433.44,250.00 435.57,250.00 437.70,250.00 439.83,250.00 441.96,250.00 444.10,250.00 446.23,250.00 448.36,250.00 450.49,250.00 452.63,250.00 454.76,250.00 456.89,250.00 459.02,250.00 461.16,250.00 463.29,237.00 465.42,250.00 467.55,250.00 469.69,250.00 471.82,250.00 473.95,250.00 476.08,250.00 478.22,237.00 480.35,250.00 482.48,250.00 484.61,250.00 486.75,250.00 488.88,250.00 491.01,250.00 493.14,250.00 495.28,250.00 497.41,250.00 499.54,250.00 501.67,250.00 503.81,250.00" fill="none" stroke="#808080" stroke-width="1.2" stroke-linejoin="miter" stroke-opacity="0.82"/>
</g>
<rect x="96.5" y="170.5" width="429" height="186" fill="none" stroke="#666666" stroke-width="1" shape-rendering="crispEdges"/>
<path d="M92.5 170V357" stroke="#c8c8c8" stroke-width="1" shape-rendering="crispEdges"/>
<path d="M90 354.5H92" stroke="#c8c8c8" stroke-width="1" shape-rendering="crispEdges"/>
<text x="85" y="358.5" font-size="12.5" fill="#444444" text-anchor="end" >−8</text>
<path d="M90 328.5H92" stroke="#c8c8c8" stroke-width="1" shape-rendering="crispEdges"/>
<text x="85" y="332.5" font-size="12.5" fill="#444444" text-anchor="end" >−6</text>
<path d="M90 302.5H92" stroke="#c8c8c8" stroke-width="1" shape-rendering="crispEdges"/>
<text x="85" y="306.5" font-size="12.5" fill="#444444" text-anchor="end" >−4</text>
<path d="M90 276.5H92" stroke="#c8c8c8" stroke-width="1" shape-rendering="crispEdges"/>
<text x="85" y="280.5" font-size="12.5" fill="#444444" text-anchor="end" >−2</text>
<path d="M90 250.5H92" stroke="#c8c8c8" stroke-width="1" shape-rendering="crispEdges"/>
<text x="85" y="254.5" font-size="12.5" fill="#444444" text-anchor="end" >0</text>
<path d="M90 224.5H92" stroke="#c8c8c8" stroke-width="1" shape-rendering="crispEdges"/>
<text x="85" y="228.5" font-size="12.5" fill="#444444" text-anchor="end" >2</text>
<path d="M90 198.5H92" stroke="#c8c8c8" stroke-width="1" shape-rendering="crispEdges"/>
<text x="85" y="202.5" font-size="12.5" fill="#444444" text-anchor="end" >4</text>
<path d="M90 172.5H92" stroke="#c8c8c8" stroke-width="1" shape-rendering="crispEdges"/>
<text x="85" y="176.5" font-size="12.5" fill="#444444" text-anchor="end" >6</text>
<path d="M96 361.5H526" stroke="#c8c8c8" stroke-width="1" shape-rendering="crispEdges"/>
<path d="M96.5 362V364" stroke="#c8c8c8" stroke-width="1" shape-rendering="crispEdges"/>
<text x="96.5" y="377.3" font-size="12.5" fill="#444444" text-anchor="middle" >0</text>
<path d="M203.5 362V364" stroke="#c8c8c8" stroke-width="1" shape-rendering="crispEdges"/>
<text x="203.125" y="377.3" font-size="12.5" fill="#444444" text-anchor="middle" textLength="45" lengthAdjust="spacingAndGlyphs" >50,000</text>
<path d="M310.5 362V364" stroke="#c8c8c8" stroke-width="1" shape-rendering="crispEdges"/>
<text x="309.75" y="377.3" font-size="12.5" fill="#444444" text-anchor="middle" textLength="53" lengthAdjust="spacingAndGlyphs" >100,000</text>
<path d="M416.5 362V364" stroke="#c8c8c8" stroke-width="1" shape-rendering="crispEdges"/>
<text x="416.375" y="377.3" font-size="12.5" fill="#444444" text-anchor="middle" textLength="53" lengthAdjust="spacingAndGlyphs" >150,000</text>
<path d="M523.5 362V364" stroke="#c8c8c8" stroke-width="1" shape-rendering="crispEdges"/>
<text x="523.0" y="377.3" font-size="12.5" fill="#444444" text-anchor="middle" textLength="53" lengthAdjust="spacingAndGlyphs" >200,000</text>
<text x="311" y="397.6" font-size="14" fill="#333333" font-weight="bold" text-anchor="middle" textLength="77" lengthAdjust="spacingAndGlyphs" >Time (ms)</text>
<text x="0" y="0" font-size="14.5" font-weight="bold" fill="#333333" text-anchor="middle" textLength="42" lengthAdjust="spacingAndGlyphs" transform="translate(61.6,263.3) rotate(-90)">Value</text>
</g>
<g shape-rendering="geometricPrecision">
<text x="800" y="155.8" font-size="13" fill="#000000" font-weight="bold" text-anchor="middle" textLength="120" lengthAdjust="spacingAndGlyphs" >histogram chart</text>
<rect x="626" y="170" width="390" height="187" fill="#c0c0c0" />
<path d="M626 312.5H1016 M626 267.5H1016 M626 222.5H1016 M626 177.5H1016 M643.5 170V357 M673.5 170V357 M702.5 170V357 M732.5 170V357 M761.5 170V357 M791.5 170V357 M820.5 170V357 M850.5 170V357 M879.5 170V357 M909.5 170V357 M938.5 170V357 M968.5 170V357 M997.5 170V357" stroke="#dadada" stroke-width="1" stroke-dasharray="2 2" fill="none" shape-rendering="crispEdges"/>
<rect x="643.5" y="177.0" width="1.5" height="180.0" fill="#d880d8" shape-rendering="crispEdges"/>
<rect x="732" y="312.0" width="8" height="45.0" fill="#70ee70" shape-rendering="crispEdges"/>
<rect x="754" y="222.0" width="8" height="135.0" fill="#70ee70" shape-rendering="crispEdges"/>
<rect x="762" y="222.0" width="7" height="135.0" fill="#eeee70" shape-rendering="crispEdges"/>
<rect x="784" y="312.0" width="7" height="45.0" fill="#eeee70" shape-rendering="crispEdges"/>
<rect x="820" y="222.0" width="8" height="135.0" fill="#f07070" shape-rendering="crispEdges"/>
<rect x="843" y="312.0" width="7" height="45.0" fill="#f07070" shape-rendering="crispEdges"/>
<rect x="849" y="177.0" width="2" height="180.0" fill="#7a68c0" shape-rendering="crispEdges"/>
<rect x="849.5" y="170" width="1" height="8" fill="#555555" />
<rect x="967" y="222.0" width="9" height="135.0" fill="#70eeee" shape-rendering="crispEdges"/>
<rect x="990" y="312.0" width="8" height="45.0" fill="#70eeee" shape-rendering="crispEdges"/>
<rect x="626.5" y="170.5" width="389" height="186" fill="none" stroke="#555555" stroke-width="1" shape-rendering="crispEdges"/>
<path d="M622.5 170V357" stroke="#c8c8c8" stroke-width="1" shape-rendering="crispEdges"/>
<path d="M620 357.5H622" stroke="#c8c8c8" stroke-width="1" shape-rendering="crispEdges"/>
<text x="615" y="361.5" font-size="12.5" fill="#444444" text-anchor="end" >0</text>
<path d="M620 312.5H622" stroke="#c8c8c8" stroke-width="1" shape-rendering="crispEdges"/>
<text x="615" y="316.5" font-size="12.5" fill="#444444" text-anchor="end" >1</text>
<path d="M620 267.5H622" stroke="#c8c8c8" stroke-width="1" shape-rendering="crispEdges"/>
<text x="615" y="271.5" font-size="12.5" fill="#444444" text-anchor="end" >2</text>
<path d="M620 222.5H622" stroke="#c8c8c8" stroke-width="1" shape-rendering="crispEdges"/>
<text x="615" y="226.5" font-size="12.5" fill="#444444" text-anchor="end" >3</text>
<path d="M620 177.5H622" stroke="#c8c8c8" stroke-width="1" shape-rendering="crispEdges"/>
<text x="615" y="181.5" font-size="12.5" fill="#444444" text-anchor="end" >4</text>
<path d="M626 361.5H1016" stroke="#c8c8c8" stroke-width="1" shape-rendering="crispEdges"/>
<path d="M643.5 362V364" stroke="#c8c8c8" stroke-width="1" shape-rendering="crispEdges"/>
<text x="643.3" y="377.3" font-size="12.5" fill="#444444" text-anchor="middle" >−7</text>
<path d="M673.5 362V364" stroke="#c8c8c8" stroke-width="1" shape-rendering="crispEdges"/>
<text x="672.8" y="377.3" font-size="12.5" fill="#444444" text-anchor="middle" >−6</text>
<path d="M702.5 362V364" stroke="#c8c8c8" stroke-width="1" shape-rendering="crispEdges"/>
<text x="702.3" y="377.3" font-size="12.5" fill="#444444" text-anchor="middle" >−5</text>
<path d="M732.5 362V364" stroke="#c8c8c8" stroke-width="1" shape-rendering="crispEdges"/>
<text x="731.8" y="377.3" font-size="12.5" fill="#444444" text-anchor="middle" >−4</text>
<path d="M761.5 362V364" stroke="#c8c8c8" stroke-width="1" shape-rendering="crispEdges"/>
<text x="761.3" y="377.3" font-size="12.5" fill="#444444" text-anchor="middle" >−3</text>
<path d="M791.5 362V364" stroke="#c8c8c8" stroke-width="1" shape-rendering="crispEdges"/>
<text x="790.8" y="377.3" font-size="12.5" fill="#444444" text-anchor="middle" >−2</text>
<path d="M820.5 362V364" stroke="#c8c8c8" stroke-width="1" shape-rendering="crispEdges"/>
<text x="820.3" y="377.3" font-size="12.5" fill="#444444" text-anchor="middle" >−1</text>
<path d="M850.5 362V364" stroke="#c8c8c8" stroke-width="1" shape-rendering="crispEdges"/>
<text x="849.8" y="377.3" font-size="12.5" fill="#444444" text-anchor="middle" >0</text>
<path d="M879.5 362V364" stroke="#c8c8c8" stroke-width="1" shape-rendering="crispEdges"/>
<text x="879.3" y="377.3" font-size="12.5" fill="#444444" text-anchor="middle" >1</text>
<path d="M909.5 362V364" stroke="#c8c8c8" stroke-width="1" shape-rendering="crispEdges"/>
<text x="908.8" y="377.3" font-size="12.5" fill="#444444" text-anchor="middle" >2</text>
<path d="M938.5 362V364" stroke="#c8c8c8" stroke-width="1" shape-rendering="crispEdges"/>
<text x="938.3" y="377.3" font-size="12.5" fill="#444444" text-anchor="middle" >3</text>
<path d="M968.5 362V364" stroke="#c8c8c8" stroke-width="1" shape-rendering="crispEdges"/>
<text x="967.8" y="377.3" font-size="12.5" fill="#444444" text-anchor="middle" >4</text>
<path d="M997.5 362V364" stroke="#c8c8c8" stroke-width="1" shape-rendering="crispEdges"/>
<text x="997.3" y="377.3" font-size="12.5" fill="#444444" text-anchor="middle" >5</text>
<text x="821" y="397.6" font-size="14" fill="#333333" font-weight="bold" text-anchor="middle" textLength="42" lengthAdjust="spacingAndGlyphs" >Value</text>
<text x="0" y="0" font-size="14.5" font-weight="bold" fill="#333333" text-anchor="middle" textLength="44" lengthAdjust="spacingAndGlyphs" transform="translate(599.3,262.5) rotate(-90)">Count</text>
</g>
<rect x="38" y="420.5" width="16" height="1.4" fill="#ff5555" shape-rendering="geometricPrecision"/>
<text x="58.0" y="425.0" font-size="13" fill="#3e3e3e" textLength="226.5" lengthAdjust="spacingAndGlyphs" >rx_dfe_tap_adapted_value_8_chan_0</text>
<rect x="576" y="415.59999999999997" width="6.3" height="10.6" fill="#ff5555" shape-rendering="geometricPrecision"/>
<text x="586.8" y="425.0" font-size="13" fill="#3e3e3e" textLength="226" lengthAdjust="spacingAndGlyphs" >rx_dfe_tap_adapted_value_8_chan_0</text>
<rect x="38" y="442.76" width="16" height="1.4" fill="#5555ff" shape-rendering="geometricPrecision"/>
<text x="58.0" y="447.26" font-size="13" fill="#3e3e3e" textLength="226.5" lengthAdjust="spacingAndGlyphs" >rx_dfe_tap_adapted_value_7_chan_0</text>
<rect x="576" y="437.85999999999996" width="6.3" height="10.6" fill="#5555ff" shape-rendering="geometricPrecision"/>
<text x="586.8" y="447.26" font-size="13" fill="#3e3e3e" textLength="226" lengthAdjust="spacingAndGlyphs" >rx_dfe_tap_adapted_value_7_chan_0</text>
<rect x="38" y="465.02" width="16" height="1.4" fill="#55ff55" shape-rendering="geometricPrecision"/>
<text x="58.0" y="469.52" font-size="13" fill="#3e3e3e" textLength="226.5" lengthAdjust="spacingAndGlyphs" >rx_dfe_tap_adapted_value_3_chan_0</text>
<rect x="576" y="460.11999999999995" width="6.3" height="10.6" fill="#55ff55" shape-rendering="geometricPrecision"/>
<text x="586.8" y="469.52" font-size="13" fill="#3e3e3e" textLength="226" lengthAdjust="spacingAndGlyphs" >rx_dfe_tap_adapted_value_3_chan_0</text>
<rect x="38" y="487.28000000000003" width="16" height="1.4" fill="#ffff55" shape-rendering="geometricPrecision"/>
<text x="58.0" y="491.78000000000003" font-size="13" fill="#3e3e3e" textLength="226.5" lengthAdjust="spacingAndGlyphs" >rx_dfe_tap_adapted_value_4_chan_0</text>
<rect x="576" y="482.38" width="6.3" height="10.6" fill="#ffff55" shape-rendering="geometricPrecision"/>
<text x="586.8" y="491.78000000000003" font-size="13" fill="#3e3e3e" textLength="226" lengthAdjust="spacingAndGlyphs" >rx_dfe_tap_adapted_value_4_chan_0</text>
<rect x="38" y="509.54" width="16" height="1.4" fill="#ff55ff" shape-rendering="geometricPrecision"/>
<text x="58.0" y="514.04" font-size="13" fill="#3e3e3e" textLength="226.5" lengthAdjust="spacingAndGlyphs" >rx_dfe_tap_adapted_value_2_chan_0</text>
<rect x="576" y="504.64" width="6.3" height="10.6" fill="#ff55ff" shape-rendering="geometricPrecision"/>
<text x="586.8" y="514.04" font-size="13" fill="#3e3e3e" textLength="226" lengthAdjust="spacingAndGlyphs" >rx_dfe_tap_adapted_value_2_chan_0</text>
<rect x="38" y="531.8" width="16" height="1.4" fill="#55ffff" shape-rendering="geometricPrecision"/>
<text x="58.0" y="536.3" font-size="13" fill="#3e3e3e" textLength="226.5" lengthAdjust="spacingAndGlyphs" >rx_dfe_tap_adapted_value_1_chan_0</text>
<rect x="576" y="526.9" width="6.3" height="10.6" fill="#55ffff" shape-rendering="geometricPrecision"/>
<text x="586.8" y="536.3" font-size="13" fill="#3e3e3e" textLength="226" lengthAdjust="spacingAndGlyphs" >rx_dfe_tap_adapted_value_1_chan_0</text>
<rect x="38" y="554.06" width="16" height="1.4" fill="#ffafaf" shape-rendering="geometricPrecision"/>
<text x="58.0" y="558.56" font-size="13" fill="#3e3e3e" textLength="226.5" lengthAdjust="spacingAndGlyphs" >rx_dfe_tap_adapted_value_9_chan_0</text>
<rect x="576" y="549.16" width="6.3" height="10.6" fill="#ffafaf" shape-rendering="geometricPrecision"/>
<text x="586.8" y="558.56" font-size="13" fill="#3e3e3e" textLength="226" lengthAdjust="spacingAndGlyphs" >rx_dfe_tap_adapted_value_9_chan_0</text>
<rect x="38" y="576.3199999999999" width="16" height="1.4" fill="#808080" shape-rendering="geometricPrecision"/>
<text x="58.0" y="580.8199999999999" font-size="13" fill="#3e3e3e" textLength="226.5" lengthAdjust="spacingAndGlyphs" >rx_dfe_tap_adapted_value_5_chan_0</text>
<rect x="576" y="571.42" width="6.3" height="10.6" fill="#808080" shape-rendering="geometricPrecision"/>
<text x="586.8" y="580.8199999999999" font-size="13" fill="#3e3e3e" textLength="226" lengthAdjust="spacingAndGlyphs" >rx_dfe_tap_adapted_value_5_chan_0</text>
<rect x="38" y="598.5799999999999" width="16" height="1.4" fill="#c00000" shape-rendering="geometricPrecision"/>
<text x="58.0" y="603.0799999999999" font-size="13" fill="#3e3e3e" textLength="226.5" lengthAdjust="spacingAndGlyphs" >rx_dfe_tap_adapted_value_6_chan_0</text>
<rect x="576" y="593.68" width="6.3" height="10.6" fill="#c00000" shape-rendering="geometricPrecision"/>
<text x="586.8" y="603.0799999999999" font-size="13" fill="#3e3e3e" textLength="226" lengthAdjust="spacingAndGlyphs" >rx_dfe_tap_adapted_value_6_chan_0</text>
<path d="M1033.5 20V664" stroke="#404040" stroke-width="1" stroke-dasharray="5.5 5" fill="none" shape-rendering="crispEdges"/>
</svg></body></html>
